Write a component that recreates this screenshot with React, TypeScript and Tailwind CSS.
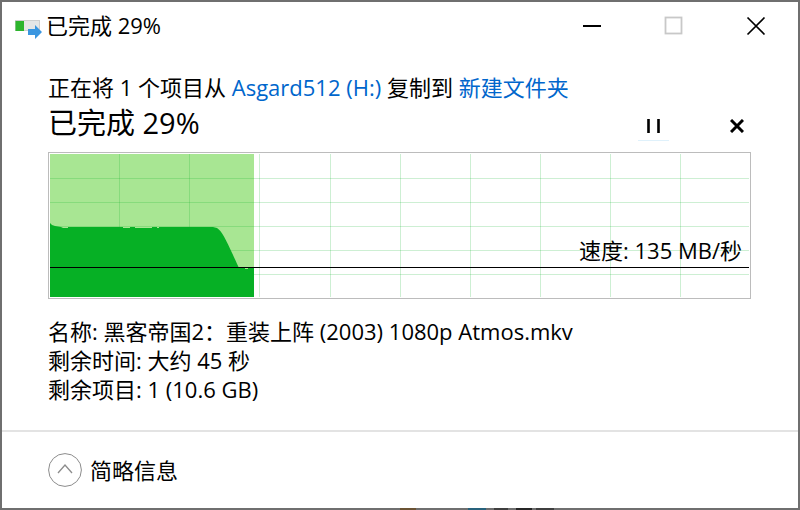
import { ReactNode, useState } from "react";

const CHART_W = 699;
const CHART_H = 143;

const columns = [69, 139, 209, 280, 350, 420, 490, 560, 630];
const rows = [24, 48, 72, 96, 120];

const speedCurve =
  "M0 143V69L2 71L5 72L11 73L13 74H18V73H73V74H80V73H85V74H102V73H107V74H109V73H163L167 74C173 78 177 88 189 114H195V115H198V114H204V143Z";

interface CaptionButtonProps {
  label: string;
  disabled?: boolean;
  children: ReactNode;
}

const CaptionButton = ({ label, disabled, children }: CaptionButtonProps) => (
  <button
    type="button"
    aria-label={label}
    disabled={disabled}
    className="flex h-12 w-[82px] items-center justify-center"
  >
    <svg width="20" height="20" viewBox="0 0 20 20" fill="none">
      {children}
    </svg>
  </button>
);

const CopyIcon = () => (
  <svg width="28" height="26" viewBox="0 0 28 26" aria-hidden="true">
    <rect x="1.5" y="7.5" width="24" height="10" fill="#e6e6e6" stroke="#cfcfcf" />
    <rect x="1.5" y="8" width="8.5" height="10" fill="#2db52d" />
    <path d="M14 16h7V12L28 19l-7 7v-4h-7z" fill="#3a96e0" />
  </svg>
);

const TitleBar = () => (
  <header className="flex h-12 items-center justify-between pr-px pl-3">
    <div className="flex items-center gap-1">
      <CopyIcon />
      <h1 className="pb-0.5 text-[22px] leading-7">已完成 29%</h1>
    </div>
    <div className="flex">
      <CaptionButton label="最小化">
        <path d="M1 10h18" stroke="#000" strokeWidth="2" />
      </CaptionButton>
      <CaptionButton label="最大化" disabled>
        <rect x="1.5" y="1.5" width="16" height="16" stroke="#c8c8c8" strokeWidth="1.8" />
      </CaptionButton>
      <CaptionButton label="关闭">
        <path d="M1.5 1.5l17 17M18.5 1.5l-17 17" stroke="#000" strokeWidth="1.7" />
      </CaptionButton>
    </div>
  </header>
);

const SpeedChart = () => (
  <div className="relative border border-[#bcbcbc] p-px">
    <svg
      className="block h-[143px] w-full"
      viewBox={`0 0 ${CHART_W} ${CHART_H}`}
      preserveAspectRatio="none"
      role="img"
      aria-label="速度"
    >
      <rect width="204" height={CHART_H} fill="#a8e693" />
      {columns.map((x) => (
        <rect key={x} x={x} width="1" height={CHART_H} fill="#06b025" opacity="0.2" />
      ))}
      {rows.map((y) => (
        <rect key={y} y={y} width={CHART_W} height="1" fill="#06b025" opacity="0.2" />
      ))}
      <path d={speedCurve} fill="#06b025" />
      <rect y="113" width={CHART_W} height="1" fill="#000" />
    </svg>
    <p className="absolute right-2 bottom-[34px] text-[22px] leading-7">速度: 135 MB/秒</p>
  </div>
);

export default function App() {
  const [expanded, setExpanded] = useState(true);

  return (
    <div className="flex min-h-screen flex-col border-x-2 border-t-2 border-[#6f6f6f] bg-white font-['Open_Sans','Noto_Sans_CJK_SC',sans-serif] text-black">
      <TitleBar />

      <main className="flex-1 pt-[23px] pr-[47px] pl-[46px]">
        <p className="text-[22px] leading-7">
          正在将 1 个项目从{" "}
          <a href="#source" className="text-[#0066cc]">
            Asgard512 (H:)
          </a>{" "}
          复制到{" "}
          <a href="#target" className="text-[#0066cc]">
            新建文件夹
          </a>
        </p>

        <div className="flex h-[51px] items-start justify-between">
          <h2 className="text-[29px] leading-[44px]">已完成 29%</h2>
          <div className="flex gap-[54px]">
            <button
              type="button"
              aria-label="暂停"
              className="flex h-10 w-[31px] items-center justify-center border-b border-[#dff1fb] pt-2.5"
            >
              <svg width="14" height="14" viewBox="0 0 14 14">
                <path d="M1.5 0v14M11.5 0v14" stroke="#000" strokeWidth="2.6" />
              </svg>
            </button>
            <button
              type="button"
              aria-label="取消"
              className="flex h-10 w-7 items-center justify-center pt-2.5"
            >
              <svg width="14" height="14" viewBox="0 0 14 14">
                <path d="M1 1l12 12M13 1L1 13" stroke="#000" strokeWidth="3" />
              </svg>
            </button>
          </div>
        </div>

        <SpeedChart />

        {expanded && (
          <div className="pt-[18px] pb-4 text-[22px] leading-[29px]">
            <p>名称: 黑客帝国2：重装上阵 (2003) 1080p Atmos.mkv</p>
            <p>剩余时间: 大约 45 秒</p>
            <p>剩余项目: 1 (10.6 GB)</p>
          </div>
        )}
      </main>

      <footer className="border-t-2 border-[#e3e3e3] py-[21px] pl-[46px]">
        <button
          type="button"
          aria-expanded={expanded}
          onClick={() => setExpanded(!expanded)}
          className="flex items-center gap-2 text-[22px] leading-7"
        >
          <svg width="34" height="34" viewBox="0 0 34 34" fill="none" stroke="#8c8c8c">
            <circle cx="17" cy="17" r="16.4" />
            <path d="M10 20l7-8 7 8" strokeWidth="1.3" />
          </svg>
          简略信息
        </button>
      </footer>

      {/* desktop showing through under the window edge */}
      <div className="flex h-0.5 bg-[#6f6f6f]" aria-hidden="true">
        <span className="ml-[398px] w-4 bg-[#6b5334]" />
        <span className="ml-[52px] w-[18px] bg-[#28627c]" />
        <span className="ml-2 w-3.5 bg-[#3f3f3f]" />
        <span className="ml-2 w-4 bg-[#262626]" />
        <span className="ml-1 w-[18px] bg-[#3f3f3f]" />
      </div>
    </div>
  );
}
